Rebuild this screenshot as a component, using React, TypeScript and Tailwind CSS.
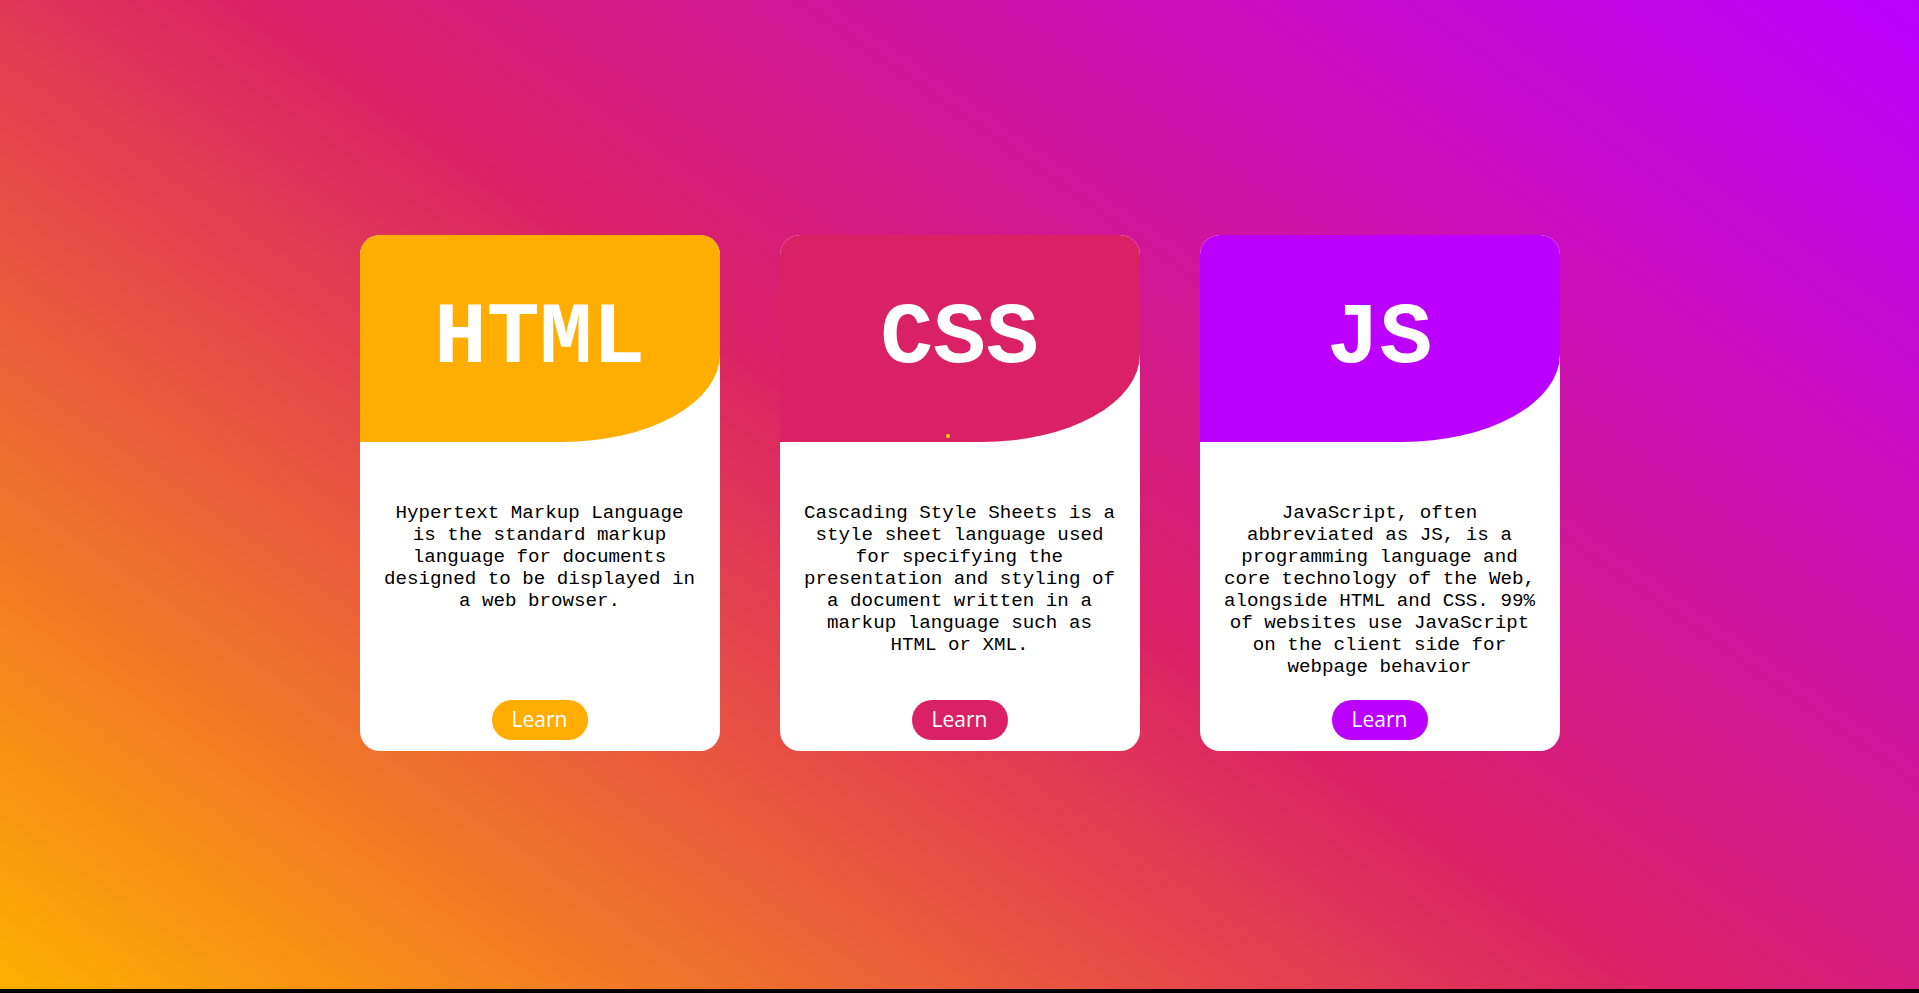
import React from 'react'

interface Course {
  title: string
  text: string
  color: string
  dot?: boolean
}

const courses: Course[] = [
  {
    title: 'HTML',
    text: 'Hypertext Markup Language is the standard markup language for documents designed to be displayed in a web browser.',
    color: 'bg-[#ffae00]',
  },
  {
    title: 'CSS',
    text: 'Cascading Style Sheets is a style sheet language used for specifying the presentation and styling of a document written in a markup language such as HTML or XML.',
    color: 'bg-[#db2166]',
    dot: true,
  },
  {
    title: 'JS',
    text: 'JavaScript, often abbreviated as JS, is a programming language and core technology of the Web, alongside HTML and CSS. 99% of websites use JavaScript on the client side for webpage behavior',
    color: 'bg-[#bb00ff]',
  },
]

function Card({ course }: { course: Course }) {
  return (
    <div className="flex h-[516px] w-[360px] flex-col items-center overflow-hidden rounded-[20px] bg-white">
      <div
        className={`relative flex h-[207px] w-full shrink-0 items-center justify-center rounded-br-[158px_88px] ${course.color}`}
      >
        <h2 className="font-['Liberation_Mono','Courier_New',monospace] text-[88px] font-bold leading-[100px] text-white">
          {course.title}
        </h2>
        {course.dot && (
          <span className="absolute left-[166px] top-[199px] h-[4px] w-[4px] rounded-full bg-[#ffe000]"></span>
        )}
      </div>
      <p className="mt-[60px] px-5 text-center font-['Liberation_Mono','Courier_New',monospace] text-[19.2px] leading-[22px] text-black">
        {course.text}
      </p>
      <button
        className={`mt-auto mb-[11px] h-[40px] w-[96px] rounded-full font-['Open_Sans',sans-serif] text-[21px] text-white ${course.color}`}
      >
        Learn
      </button>
    </div>
  )
}

export default function App() {
  return (
    <div className="h-screen bg-black">
      <div className="flex h-[989px] justify-center gap-[60px] bg-[linear-gradient(35deg,#ffae00,#db2166,#bb00ff)] pt-[235px]">
        {courses.map((c) => (
          <Card key={c.title} course={c} />
        ))}
      </div>
    </div>
  )
}
